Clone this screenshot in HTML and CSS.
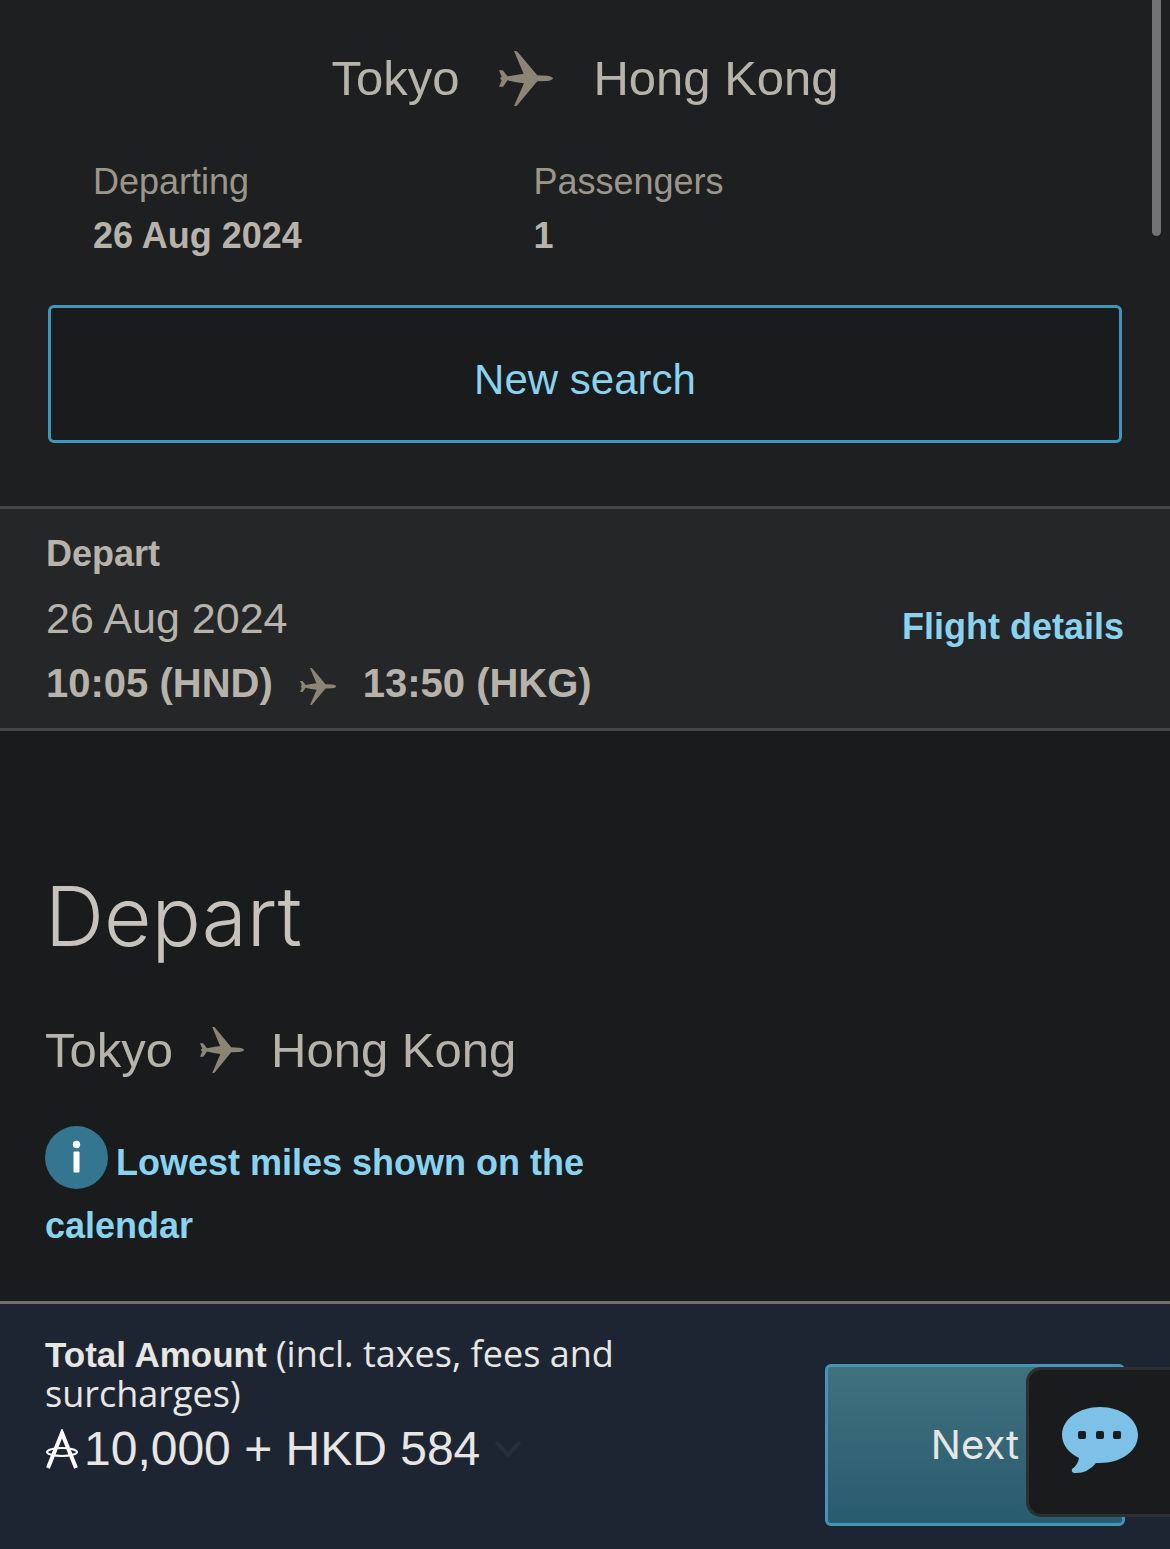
FILE: index.html
```
<!DOCTYPE html>
<html lang="en">
<head>
<meta charset="utf-8">
<meta name="viewport" content="width=device-width, initial-scale=1">
<title>Select flights</title>
<link rel="stylesheet" href="styles.css">
</head>
<body>
<svg class="defs" aria-hidden="true">
  <symbol id="plane" viewBox="34 33 158 165" preserveAspectRatio="none">
    <path d="M78 33L84 33Q88 34 91 39L146 106L176 107Q192 110 192 115Q192 120 176 123L146 124L91 191Q88 197 84 198L78 198L107 130Q84 127 59 121L46 140L34 140L42 121L38 118L38 113L42 110L34 91L45 91L59 109Q84 104 106 101Z"/>
  </symbol>
</svg>
<header class="search">
  <h1 class="route route-main">
    <span>Tokyo</span>
    <svg class="plane plane-large" role="img" aria-label="to"><use href="#plane"/></svg>
    <span>Hong Kong</span>
  </h1>
  <dl class="criteria">
    <div><dt>Departing</dt><dd>26 Aug 2024</dd></div>
    <div><dt>Passengers</dt><dd>1</dd></div>
  </dl>
  <button class="new-search" type="button">New search</button>
  <div class="scroll-thumb"></div>
</header>
<section class="selected">
  <div>
    <h2 class="selected-title">Depart</h2>
    <p class="selected-date">26 Aug 2024</p>
    <p class="selected-times">
      <span>10:05 (HND)</span>
      <svg class="plane plane-small" role="img" aria-label="to"><use href="#plane"/></svg>
      <span>13:50 (HKG)</span>
    </p>
  </div>
  <a class="details" href="#details">Flight details</a>
</section>
<main class="depart">
  <h2 class="depart-title">Depart</h2>
  <p class="route route-leg">
    <span>Tokyo</span>
    <svg class="plane plane-medium" role="img" aria-label="to"><use href="#plane"/></svg>
    <span>Hong Kong</span>
  </p>
  <p class="note"><a href="#calendar"><svg class="info" viewBox="0 0 63 63" aria-hidden="true"><circle cx="31.5" cy="31.5" r="31.5" fill="#34758f"/><circle cx="31.5" cy="18.5" r="3.7" fill="#fff"/><rect x="28.5" y="25.5" width="6" height="21" rx="1" fill="#fff"/></svg>Lowest miles shown on the calendar</a></p>
</main>
<footer class="total">
  <div class="total-text">
    <p class="total-label"><strong>Total Amount</strong> (incl. taxes, fees and surcharges)</p>
    <p class="amount">
      <svg class="miles" viewBox="0 0 33 40" role="img" aria-label="Asia Miles" fill="none" stroke="#fff"><path d="M2.5 39L16.5 4L30.5 39" stroke-width="4"/><ellipse cx="16.5" cy="23" rx="15" ry="4" stroke-width="2"/></svg>
      <span>10,000 + HKD 584</span>
      <svg class="chevron" viewBox="0 0 28 18" aria-hidden="true"><path d="M2 2L14 15L26 2" fill="none" stroke="#262f37" stroke-width="4"/></svg>
    </p>
  </div>
  <button class="next" type="button">Next</button>
  <button class="chat" type="button" aria-label="Chat">
    <svg viewBox="0 0 76 67" aria-hidden="true"><path d="M38 0C59 0 76 12 76 28S59 56 38 56L34 56Q25 67 12 66Q9 65 10 62Q16 58 17 51C7 46 0 38 0 28C0 12 17 0 38 0Z" fill="#7ec1e8"/><g fill="#191b1d"><rect x="16" y="24" width="8" height="8" rx="2"/><rect x="34" y="24" width="8" height="8" rx="2"/><rect x="51" y="24" width="8" height="8" rx="2"/></g></svg>
  </button>
</footer>
</body>
</html>
```

FILE: styles.css
```
* {
  box-sizing: border-box;
}

body,
h1,
h2,
p,
dl,
dd {
  margin: 0;
}

body {
  display: flex;
  flex-direction: column;
  min-height: 100vh;
  background: #191b1d;
  color: #b7b3ab;
  font: 42px/48px "Liberation Sans", Arial, sans-serif;
}

button {
  font: inherit;
  cursor: pointer;
}

a {
  color: #8ad3f0;
  text-decoration: none;
}

.defs {
  position: absolute;
  width: 0;
  height: 0;
}

.plane {
  flex: none;
  fill: #8c8576;
}

.plane-large {
  width: 54px;
  height: 55px;
}

.plane-medium {
  width: 44px;
  height: 46px;
}

.plane-small {
  width: 36px;
  height: 37px;
  margin-top: 6px;
}

.route {
  display: flex;
  align-items: center;
  font-size: 49px;
  font-weight: 400;
  line-height: 56px;
}

.search {
  position: relative;
  padding: 50px 48px 63px;
  background: #1d1f21;
}

.route-main {
  justify-content: center;
  gap: 40px;
}

.criteria {
  display: grid;
  grid-template-columns: 1fr 1fr;
  padding: 49px 148px 0 45px;
  font-size: 36px;
  line-height: 54px;
}

.criteria dt {
  color: #9c968a;
}

.criteria dd {
  font-weight: 700;
}

.new-search {
  display: block;
  width: 100%;
  height: 138px;
  margin-top: 42px;
  padding: 12px 0 0;
  border: 3px solid #4396b9;
  border-radius: 6px;
  background: #191b1d;
  color: #8ad3f0;
}

.scroll-thumb {
  position: absolute;
  top: 0;
  right: 9px;
  width: 9px;
  height: 236px;
  border-radius: 0 0 5px 5px;
  background: #717273;
}

.selected {
  display: flex;
  justify-content: space-between;
  align-items: center;
  padding: 21px 46px 20px;
  border: solid #444648;
  border-width: 3px 0;
  background: #242628;
}

.selected-title {
  font-size: 36px;
  line-height: 48px;
}

.selected-date {
  font-size: 43px;
  line-height: 80px;
}

.selected-times {
  display: flex;
  align-items: center;
  gap: 27px;
  font-size: 40px;
  font-weight: 700;
  line-height: 50px;
}

.details {
  padding-top: 16px;
  font-size: 36px;
  font-weight: 700;
}

.depart {
  flex: 1;
  padding: 138px 45px 44px;
}

.depart-title {
  font-family: Inter, sans-serif;
  font-size: 82px;
  font-weight: 300;
  line-height: 96px;
  color: #c7c3bc;
}

.route-leg {
  gap: 27px;
  margin-top: 57px;
}

.note {
  width: 55%;
  margin-top: 48px;
  font-size: 36px;
  font-weight: 700;
  line-height: 63px;
}

.info {
  width: 63px;
  height: 63px;
  margin-right: 8px;
  vertical-align: -14px;
}

.total {
  position: relative;
  display: flex;
  justify-content: space-between;
  align-items: flex-start;
  padding: 30px 45px 23px;
  border-top: 3px solid #75716a;
  background: #1d2533;
  color: #e8e6e3;
}

.total-text {
  width: 600px;
}

.total-label {
  font: 36px/39px "Open Sans", sans-serif;
}

.total-label strong {
  font: 700 35px/39px "Liberation Sans", Arial, sans-serif;
}

.amount {
  display: flex;
  align-items: center;
  font-size: 48px;
  line-height: 72px;
}

.miles {
  width: 34px;
  height: 40px;
  margin-right: 5px;
}

.chevron {
  width: 28px;
  height: 18px;
  margin-left: 14px;
}

.next {
  width: 300px;
  height: 162px;
  margin-top: 30px;
  border: 3px solid #4396b9;
  border-radius: 6px;
  background: linear-gradient(#3f717f, #295b6e);
  color: #e8e6e3;
  font-family: Inter, sans-serif;
  font-size: 40px;
}

.chat {
  position: absolute;
  top: 63px;
  right: 0;
  display: flex;
  align-items: center;
  width: 144px;
  height: 150px;
  padding: 0 0 4px 33px;
  border: 3px solid #2d3033;
  border-right: 0;
  border-radius: 15px 0 0 15px;
  background: #191b1d;
}

.chat svg {
  width: 76px;
  height: 67px;
}
```
